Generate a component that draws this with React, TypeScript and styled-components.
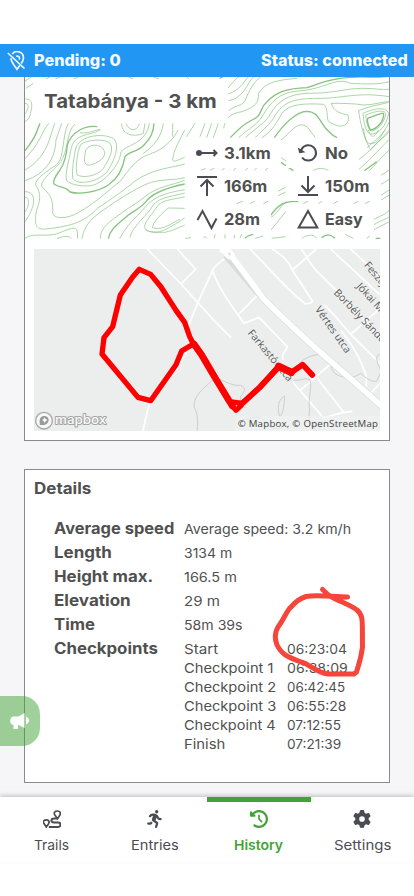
import React, { useLayoutEffect, useRef, useState } from "react";
import styled, { createGlobalStyle } from "styled-components";
import { FaClockRotateLeft, FaGear, FaPersonRunning } from "react-icons/fa6";

const GlobalStyle = createGlobalStyle`
  * { box-sizing: border-box; }
  body { margin: 0; background: #f6f6f9; overflow: hidden; }
`;

const Screen = styled.div`
  position: relative;
  display: flex;
  flex-direction: column;
  width: 414px;
  height: 896px;
  overflow: hidden;
  background: #f6f6f9;
  color: #505050;
  font-family: Inter, "Open Sans", sans-serif;
`;

const SystemBar = styled.div`
  flex: none;
  height: 44px;
  background: #fff;
`;

const StatusBar = styled.header`
  flex: none;
  display: flex;
  align-items: center;
  height: 33px;
  padding: 0 6px 0 7px;
  background: #2196f3;
  color: #f4f9fe;
  font-size: 15.5px;
  font-weight: 800;
`;

const PinOff = styled.svg`
  width: 20px;
  height: 20px;
  margin-right: 7px;
`;

const Spacer = styled.div`
  flex: 1;
`;

const Content = styled.main`
  flex: 1;
  min-height: 0;
  padding: 0 24px;
`;

const TrailCard = styled.section`
  height: 364px;
  border: 1px solid #8b8b8b;
  border-top: 0;
  background: #fff;
`;

const TrailHeader = styled.div`
  position: relative;
  height: 162px;
  padding: 2px 0 0 9px;
`;

const Contours = styled.svg`
  position: absolute;
  inset: 0;
  width: 364px;
  height: 162px;
`;

const TrailTitle = styled.h1`
  position: relative;
  display: flex;
  align-items: center;
  width: 194px;
  height: 44px;
  margin: 0;
  padding-left: 10px;
  background: #fff;
  font-size: 19.3px;
  font-weight: 750;
`;

const StatGrid = styled.div`
  position: relative;
  display: grid;
  grid-template-columns: 101px 1fr;
  row-gap: 3px;
  margin: 15px 0 0 151px;
`;

const Stat = styled.div<{ $width: number }>`
  display: flex;
  align-items: center;
  gap: 5px;
  width: ${(p) => p.$width}px;
  height: 30px;
  padding-left: 10px;
  background: #fff;
  font-size: 16px;
  line-height: 20px;
  font-weight: 750;
`;

const StatIcon = styled.svg`
  flex: none;
  width: 24px;
  height: 24px;
  fill: none;
  stroke: #4b4b53;
  stroke-width: 2;
`;

const MapView = styled.svg`
  display: block;
  width: 346px;
  height: 182px;
  margin: 10px 0 0 9px;
  background: #eceeed;
`;

const DetailsCard = styled.section`
  height: 314px;
  margin-top: 28px;
  padding: 8px 9px;
  border: 1px solid #8b8b8b;
  background: #fff;
`;

const SectionTitle = styled.h2`
  margin: 0 0 17px;
  font-size: 15.5px;
  line-height: 22px;
  font-weight: 750;
`;

const DetailRow = styled.div`
  display: grid;
  grid-template-columns: 130px 1fr;
  margin-left: 20px;
  line-height: 24px;
`;

const DetailLabel = styled.div`
  height: 24px;
  font-size: 15.5px;
  font-weight: 750;
`;

const DetailValue = styled.div`
  font-size: 13.4px;
  color: #505050;
`;

const CheckpointList = styled.div`
  display: grid;
  grid-template-columns: 103px 1fr;
  grid-auto-rows: 19px;
  align-items: center;
  justify-items: start;
  padding-top: 3px;
  line-height: 19px;
`;

const NavBar = styled.nav`
  position: relative;
  flex: none;
  display: grid;
  grid-template-columns: repeat(4, 1fr);
  height: 99px;
  background: #fff;
  box-shadow: 0 -1px 5px rgba(0, 0, 0, 0.25);
`;

const NavItem = styled.div<{ $active?: boolean }>`
  display: flex;
  flex-direction: column;
  align-items: center;
  height: 66px;
  padding-top: 8px;
  border-top: 5px solid ${(p) => (p.$active ? "#41a336" : "transparent")};
  border-bottom: 1px solid #fbfbfb;
  color: ${(p) => (p.$active ? "#41a336" : "#4b4b53")};
  font-size: 13.4px;
  font-weight: ${(p) => (p.$active ? 600 : 400)};
  svg { width: 18px; height: 18px; }
`;

const NavLabel = styled.div`
  margin-top: 7px;
  line-height: 20px;
`;

const FeedbackTab = styled.div`
  position: absolute;
  left: 0;
  top: 696px;
  display: flex;
  align-items: center;
  width: 40px;
  height: 50px;
  padding-left: 10px;
  border-radius: 0 18px 18px 0;
  background: rgba(67, 163, 54, 0.5);
`;

const Markup = styled.svg`
  position: absolute;
  left: 270px;
  top: 584px;
  width: 100px;
  height: 98px;
  overflow: visible;
`;

const LineBox = styled.span<{ $w: number }>`
  display: inline-block;
  width: ${(p) => p.$w}px;
  white-space: nowrap;
  vertical-align: top;
`;

const Run = styled.span`
  display: inline-block;
  transform-origin: left center;
`;

/** A single line of text stretched so that it fills the given width. */
function Line({ w, children }: { w: number; children: string }) {
  const ref = useRef<HTMLSpanElement>(null);
  const [stretch, setStretch] = useState(1);
  useLayoutEffect(() => {
    if (ref.current) setStretch(w / ref.current.offsetWidth);
  }, [w, children]);
  return (
    <LineBox $w={w}>
      <Run ref={ref} style={{ transform: `scaleX(${stretch})` }}>
        {children}
      </Run>
    </LineBox>
  );
}

const thinWest = [
  "M195 72 C195 45 230 38 248 54 C262 72 248 88 235 95 C212 107 195 112 193 90Z",
  "M182 44 C200 28 255 25 270 40 C285 58 263 95 250 115 C232 140 185 145 171 134 C165 110 173 60 182 44Z",
  "M166 60 C175 10 265 8 285 30 C300 55 275 110 257 130 C225 160 170 165 158 145 C155 120 162 85 166 60Z",
  "M242 -2 C220 18 160 5 152 62 C148 90 133 135 140 152 C155 167 195 170 218 166 C255 155 300 105 303 65 C320 45 380 40 388 -20",
  "M15 86 C40 60 60 30 72 0 L86 -20",
  "M15 120 C50 100 75 70 88 30 L104 -20",
  "M15 152 C80 130 105 85 108 30 L125 -20",
  "M145 -20 C125 20 135 80 110 104 C80 125 45 145 47 165 C65 190 60 215 50 240 C40 285 50 300 75 297 C160 290 200 270 232 235 C270 210 320 175 345 153 C400 115 450 115 494 102",
  "M165 -18 C140 5 145 50 128 85 C120 110 60 145 65 170 C100 200 98 215 98 250 C105 270 145 265 175 248 C240 210 270 175 300 155 C330 115 350 85 390 72 C440 55 465 20 474 0",
  "M15 185 C40 185 45 205 38 230 C32 250 25 260 15 275",
  "M15 202 C25 200 28 215 23 232 L15 246",
  "M15 325 C40 305 80 325 120 308 C145 298 170 285 172 305 L173 326",
  "M110 326 C130 318 150 316 153 326",
  "M186 326 C192 290 210 270 240 247 C300 205 340 180 380 162 C420 145 465 152 494 143",
  "M241 326 C240 300 260 280 290 260 C320 235 345 225 375 200 C410 170 455 166 494 151",
  "M299 326 C320 285 350 260 370 238 C400 200 430 190 494 179",
  "M330 322 C335 295 370 265 390 240 C410 200 445 203 494 189",
  "M494 201 C450 210 420 210 408 235 C390 260 365 285 377 298 C405 320 440 300 494 264",
  "M494 286 C475 292 465 300 435 307 C405 308 372 303 377 298",
  "M494 235 L445 234 C425 250 400 275 397 293 C430 304 460 275 480 268",
  "M458 90 C460 60 480 30 494 0 M494 82 C470 92 460 98 458 90",
  "M305 -20 C305 20 350 20 370 10 L375 -20",
  "M318 -20 C328 5 350 5 358 -18",
  "M430 -20 C425 20 400 50 370 70 M458 -20 L458 20 M525 -20 L500 20 M555 -20 L540 20 M575 -20 L560 23 M595 -20 L580 23",
  "M15 -93 C45 -95 35 -60 27 -35 L15 -25 M15 -80 C30 -80 25 -60 15 -48",
  "M18 -125 L40 -140 M15 -147 L35 -159 M75 -152 L90 -159 M105 -152 L120 -159 M160 -152 L175 -159 M325 -159 L345 -150 M400 -159 L425 -150 M500 -159 L510 -150",
  "M180 8 C205 12 225 0 240 -2",
];

const boldWest = [
  "M15 62 C35 35 45 25 52 0 L60 -20",
  "M232 -10 C195 -15 155 5 142 45 C140 75 133 100 120 120 C105 140 98 155 102 162 C120 175 138 168 150 186 C180 195 235 185 265 165 C295 145 310 110 315 80 C325 65 355 65 372 45 C395 20 400 5 402 -20",
  "M265 326 C270 295 300 278 325 255 C355 235 370 228 382 210 C405 185 445 172 494 162",
];

const thinEast = [
  "M62 145 C85 120 90 110 100 110 M64 162 C100 150 110 125 125 110 M65 182 C110 175 120 130 140 110 M65 212 C90 192 105 200 115 180 C125 155 140 125 162 110",
  "M95 293 C125 265 150 255 165 230 C195 180 220 155 285 152 C355 145 390 110 430 130 C470 132 510 135 547 125",
  "M115 293 C150 260 175 250 190 222 C210 185 245 162 300 160 C390 160 410 145 470 145 C500 145 525 150 547 148",
  "M145 293 C170 265 190 255 205 225 C235 180 270 175 340 175 C410 175 450 155 547 170",
  "M165 293 C200 270 210 245 225 220 C245 190 300 190 350 193 C370 210 350 245 375 250 C410 270 430 250 423 225 C400 220 380 215 373 190 C400 190 440 190 470 195 C500 195 525 185 547 185",
  "M50 265 C55 230 75 220 105 215 C145 200 155 190 155 160 C175 125 215 120 270 115",
  "M222 300 C250 280 270 240 300 260 L325 293",
  "M453 213 C480 200 515 195 545 187 M455 213 C460 250 470 290 488 325",
  "M468 220 C490 210 535 195 545 220 C540 255 515 285 490 282 C475 275 470 245 468 220Z",
  "M476 225 C500 215 538 205 536 225 C530 250 510 275 490 272 C480 260 478 240 476 225Z",
  "M480 323 C505 300 530 285 547 245",
  "M490 330 C510 305 535 290 547 275",
];
const boldEast = [
  "M70 293 C100 260 115 250 135 240 C170 225 155 205 180 185 C210 155 240 145 300 143 C340 130 360 118 430 112 C470 108 510 115 547 109",
  "M202 293 C225 260 265 214 300 214 C345 215 335 265 390 293",
  "M482 235 C500 228 530 215 530 222 C530 245 510 267 490 270 C485 260 480 245 482 235Z",
  "M38 115 L48 110",
];

const thinSouth = [
  "M520 90 C560 60 580 35 613 0 M522 118 C565 80 585 55 613 28 M553 122 C575 100 595 75 613 60 M585 138 L613 120 M585 165 L613 148 M585 198 L613 180 M585 212 L613 195",
  "M535 -5 C540 25 545 45 560 40 C580 40 585 20 600 0 M550 0 C560 30 570 20 580 0",
  "M565 270 C585 255 605 255 613 240 M565 285 C590 270 600 270 613 260 M565 300 L613 275",
  "M48 121 L62 115 M75 121 L88 114 M110 121 L120 113 M145 121 L153 114 M180 121 L190 113 M208 121 L215 114 M240 121 L250 113",
  "M278 184 L302 172 M278 198 L302 186 M258 262 C280 250 290 220 305 215 M258 300 L302 245",
  "M155 221 L175 213 M195 221 L210 213 M235 221 L250 213 M355 220 L370 214 M400 220 L412 214 M445 221 L460 213 M505 221 L520 214 M540 221 L555 213",
  "M385 121 C400 113 415 114 430 121 M288 83 L303 93",
  "M0 325 L18 323 M55 325 C60 315 65 325 67 325 M88 325 L90 313 M120 325 L120 313 M148 325 L148 315 M165 325 L170 313 M210 325 L235 318 M260 325 L302 320 M350 325 C365 315 385 310 395 325 M480 313 L505 325 M545 325 L555 318",
];
const boldSouth = [
  "M180 325 C185 318 195 315 205 313 M258 255 C280 225 300 210 340 215",
  "M288 97 C300 105 310 112 325 122 M538 122 L575 95 M410 323 C425 310 440 315 450 325 M572 325 L586 325",
];

function ContourMap() {
  return (
    <Contours viewBox="25 77 364 162" fill="none" stroke="#79bd72">
      <g transform="translate(20 130) scale(.33333)">
        <g strokeWidth="2.5" opacity=".74">{thinWest.map((d) => <path key={d} d={d} />)}</g>
        <g strokeWidth="4" opacity=".9">{boldWest.map((d) => <path key={d} d={d} />)}</g>
      </g>
      <g transform="translate(207 40) scale(.33333)">
        <g strokeWidth="2.5" opacity=".74">{thinEast.map((d) => <path key={d} d={d} />)}</g>
        <g strokeWidth="4" opacity=".9">{boldEast.map((d) => <path key={d} d={d} />)}</g>
      </g>
      <g transform="translate(185 130) scale(.33333)">
        <g strokeWidth="2.5" opacity=".74">{thinSouth.map((d) => <path key={d} d={d} />)}</g>
        <g strokeWidth="4" opacity=".9">{boldSouth.map((d) => <path key={d} d={d} />)}</g>
      </g>
    </Contours>
  );
}

const streets = [
  "M370 27 L471 132 L570 241 L622 294",
  "M460 27 L515 87 L471 132",
  "M357 573 C365 530 370 505 382 480 L480 350 L492 330 M492 260 L522 187 L567 88 C590 60 605 55 620 40",
  "M565 92 C590 160 640 220 660 250 L705 232 L790 320 C785 340 770 335 778 360 M645 222 L705 160",
  "M678 27 C740 90 800 160 845 192 L862 188 L865 183 L805 90 C790 55 765 40 745 27",
  "M805 90 L877 27 M832 27 C850 50 860 75 880 95 L985 200 L1068 290",
  "M920 27 L1068 165 M980 27 L1068 110 M1068 205 L980 283 M980 283 L1068 370",
  "M980 283 C950 250 930 220 900 195 M950 270 C990 320 1010 360 1020 390 C1030 405 1027 420 1027 440 M1040 460 L1068 430",
  "M925 367 L830 450 M880 415 L960 518 L985 513 M807 427 L900 535 C935 520 955 517 985 515",
];

const streams = [
  "M520 573 C522 530 520 520 510 500 C510 465 535 450 560 425 C580 400 610 440 650 436 C670 445 660 455 650 470 C650 490 655 500 665 504",
  "M823 375 C840 350 880 338 910 345 C925 370 915 390 940 405 C975 420 995 410 1010 400 C1030 420 1060 435 1062 415 C1080 385 1060 380 1060 365 C1055 350 1060 345 1068 343",
  "M782 468 C760 480 760 505 767 530 C780 520 780 490 782 468",
  "M808 420 C830 425 840 410 858 420 C865 450 850 480 857 510 C850 550 865 565 880 573",
  "M653 540 C680 540 700 520 720 540 C740 570 755 570 775 560",
];

function TrailMap() {
  return (
    <MapView viewBox="30 27 1038 546">
      <g fill="none" stroke="#fff" strokeWidth="5" strokeLinejoin="round">
        {streets.map((d) => <path key={d} d={d} />)}
      </g>
      <g fill="none" stroke="#cccfcd" strokeWidth="3">{streams.map((d) => <path key={d} d={d} />)}</g>
      <path d="M605 45 L720 178 C850 310 930 370 1075 500" fill="none" stroke="#d9dbda" strokeWidth="21" />
      <path d="M590 27 L620 45 L720 178 C850 310 930 370 1075 500" fill="none" stroke="#fff" strokeWidth="17" />
      <ellipse cx="615" cy="42" rx="20" ry="14" fill="#fff" transform="rotate(45 615 42)" />
      <ellipse cx="617" cy="42" rx="5" ry="3" fill="#dedede" transform="rotate(45 617 42)" />
      <g
        fontFamily="Open Sans, sans-serif"
        fontSize="31"
        fill="#565656"
        stroke="#f2f3f2"
        strokeWidth="3"
        paintOrder="stroke"
      >
        <text transform="translate(670 280) rotate(50)" textLength="191">Farkastó utca</text>
        <text transform="translate(872 208) rotate(55)" textLength="163">Vértes utca</text>
        <text transform="translate(928 160) rotate(46)" textLength="222">Borbély Sándor</text>
        <text transform="translate(996 140) rotate(48)">Jókai Mór</text>
        <text transform="translate(1019 76) rotate(50)">Feszty</text>
      </g>
      <g fill="none" stroke="#f00" strokeLinecap="round" strokeLinejoin="round">
        <path
          strokeWidth="16"
          d="M508 312 L497 290 L482 247 L456 211 L411 141 L380 103 L346 88 L326 111 L289 165 L266 260 L240 293 L234 342 L342 472 L380 482 L456 374 L473 333 L508 312 L533 342 L570 405 L615 485 L655 490 L710 440 L766 380"
        />
        <path strokeWidth="20" d="M510 312 L533 345 L570 408 L625 498" />
        <path strokeWidth="15" d="M622 495 L636 511 L652 496" />
        <path strokeWidth="17" d="M650 495 L708 441 L764 379 L802 397 L836 374 L865 405" />
        <path strokeWidth="22" d="M764 379 L802 397" />
      </g>
      <rect x="632" y="528" width="436" height="45" fill="#f1f3f2" opacity=".6" />
      <text x="641" y="560" fontFamily="Open Sans, sans-serif" fontSize="29" fill="#414141" textLength="421">
        © Mapbox, © OpenStreetMap
      </text>
      <g>
        <circle cx="60" cy="542" r="25" fill="#f7f7f7" stroke="#a5a5a5" strokeWidth="4" />
        <circle cx="60" cy="542" r="18" fill="#f7f7f7" />
        <path d="M48 555 C43 532 54 527 63 528 C75 530 77 543 70 550 C62 557 55 555 48 555Z" fill="#9a9a9a" />
        <path d="M62 532 L65 538 L71 540 L65 543 L62 549 L59 543 L54 540 L59 538Z" fill="#fff" />
        <text
          x="93"
          y="553"
          fontFamily="Inter, sans-serif"
          fontSize="38"
          fontWeight="500"
          fill="#fafafa"
          stroke="#a5a5a5"
          strokeWidth="6"
          paintOrder="stroke"
          strokeLinejoin="round"
          textLength="154"
          lengthAdjust="spacingAndGlyphs"
        >
          mapbox
        </text>
      </g>
    </MapView>
  );
}

const stats: { value: string; w: number; box: number; icon: React.ReactNode }[] = [
  { value: "3.1km", w: 47, box: 96, icon: <><circle cx="4" cy="12" r="3" fill="#4b4b53" stroke="none" /><path d="M4 12H22M18.5 9L21.5 12L18.5 15" /></> },
  { value: "No", w: 23, box: 73, icon: <><path d="M4.600 11.500A7.700 7.700 0 1 1 6.100 16.500" /><path d="M1.800 6.500L3.300 12.300L9.500 11.300Z" fill="#4b4b53" stroke="none" /></> },
  { value: "166m", w: 43, box: 93, icon: <><path d="M2 3H22M12 22V6M5.5 12.500L12 6L18.500 12.500" /></> },
  { value: "150m", w: 45, box: 95, icon: <><path d="M2 21H22M12 2V18M5.500 11.500L12 18L18.500 11.500" /></> },
  { value: "28m", w: 36, box: 86, icon: <path d="M2.500 13L7.500 4L16.500 21L21.500 11.500" /> },
  { value: "Easy", w: 38, box: 88, icon: <path d="M12 4L21.300 20.500H2.700Z" /> },
];

const details: [string, number, string, number][] = [
  ["Average speed", 120, "Average speed: 3.2 km/h", 167],
  ["Length", 58, "3134 m", 48],
  ["Height max.", 99, "166.5 m", 53],
  ["Elevation", 77, "29 m", 36],
  ["Time", 41, "58m 39s", 59],
];

const checkpoints: [string, number, string, number][] = [
  ["Start", 34, "06:23:04", 60],
  ["Checkpoint 1", 89, "06:38:09", 61],
  ["Checkpoint 2", 92, "06:42:45", 58],
  ["Checkpoint 3", 92, "06:55:28", 59],
  ["Checkpoint 4", 92, "07:12:55", 54],
  ["Finish", 41, "07:21:39", 54],
];

function TrailsIcon() {
  return (
    <svg viewBox="0 0 18 18" fill="none" stroke="currentColor" strokeWidth="2">
      <path d="M14.5 8.700L12 5.200C10.200 2.400 12.200 1 14.500 1S18.200 3 16.800 5.200Z" strokeWidth="1.700" />
      <path d="M3.300 17L1 13.600C-.5 11.200 1.200 9.800 3.300 9.800S7 11.400 5.600 13.800Z" strokeWidth="1.700" />
      <path d="M14.500 8.600H11.200C7.500 8.600 7.500 12.400 11.200 12.400H15C18.200 12.400 18.200 17 15 17H5.800" />
    </svg>
  );
}

export default function App() {
  return (
    <Screen>
      <GlobalStyle />
      <SystemBar />
      <StatusBar>
        <PinOff viewBox="0 0 20 20" fill="none" stroke="currentColor" strokeWidth="1.7">
          <path d="M5.3 3A6.2 6.2 0 0 1 16.4 7.2C16.4 9 15.4 10.9 14.3 12.5M12.8 14.5L10 18.3C7.6 15 4 11 3.9 7.3" />
          <path d="M9 5.400A2.300 2.300 0 0 1 12.200 8.500" />
          <path d="M.8 2L17.500 17.500" />
        </PinOff>
        <Line w={87}>Pending: 0</Line>
        <Spacer />
        <Line w={147}>Status: connected</Line>
      </StatusBar>
      <Content>
        <TrailCard>
          <TrailHeader>
            <ContourMap />
            <TrailTitle><Line w={173}>Tatabánya - 3 km</Line></TrailTitle>
            <StatGrid>
              {stats.map((s) => (
                <Stat key={s.value} $width={s.box}>
                  <StatIcon viewBox="0 0 24 24">{s.icon}</StatIcon>
                  <Line w={s.w}>{s.value}</Line>
                </Stat>
              ))}
            </StatGrid>
          </TrailHeader>
          <TrailMap />
        </TrailCard>
        <DetailsCard>
          <SectionTitle><Line w={57}>Details</Line></SectionTitle>
          {details.map(([label, lw, value, vw]) => (
            <DetailRow key={label}>
              <DetailLabel><Line w={lw}>{label}</Line></DetailLabel>
              <DetailValue><Line w={vw}>{value}</Line></DetailValue>
            </DetailRow>
          ))}
          <DetailRow>
            <DetailLabel><Line w={104}>Checkpoints</Line></DetailLabel>
            <DetailValue>
              <CheckpointList>
                {checkpoints.map(([name, nw, time, tw]) => (
                  <React.Fragment key={name}>
                    <Line w={nw}>{name}</Line>
                    <Line w={tw}>{time}</Line>
                  </React.Fragment>
                ))}
              </CheckpointList>
            </DetailValue>
          </DetailRow>
        </DetailsCard>
      </Content>
      <NavBar>
        <NavItem><TrailsIcon /><NavLabel><Line w={35}>Trails</Line></NavLabel></NavItem>
        <NavItem><FaPersonRunning /><NavLabel><Line w={48}>Entries</Line></NavLabel></NavItem>
        <NavItem $active><FaClockRotateLeft /><NavLabel><Line w={49}>History</Line></NavLabel></NavItem>
        <NavItem><FaGear /><NavLabel><Line w={57}>Settings</Line></NavLabel></NavItem>
      </NavBar>
      <FeedbackTab>
        <svg width="20" height="18" viewBox="0 0 20 18" fill="#fff">
          <path d="M4 4.500H8.500L14.500 1V16L8.500 13H8V17H3.500V13C1.200 13 .2 11 .2 8.800S1.400 4.500 4 4.500Z" />
          <path d="M16 4.500C20 6 20 11 16 12.500Z" />
        </svg>
      </FeedbackTab>
      <Markup viewBox="0 0 100 98" fill="none" stroke="#f6453a" strokeWidth="5" strokeLinecap="round" strokeLinejoin="round">
        <path d="M52.5 5.500L59 11.500C70 18 79 20 87 26C94 32 92 38 92.500 63C91 75 88 83 86.500 88L84 90H58C45 88 40 80 31 78C18 73 12 71 7 61C5 55 4 50 8 43C14 35 17 26 21 23C27 16 31 14 36 12.500C48 10.500 64 13 77.500 13" />
      </Markup>
    </Screen>
  );
}
